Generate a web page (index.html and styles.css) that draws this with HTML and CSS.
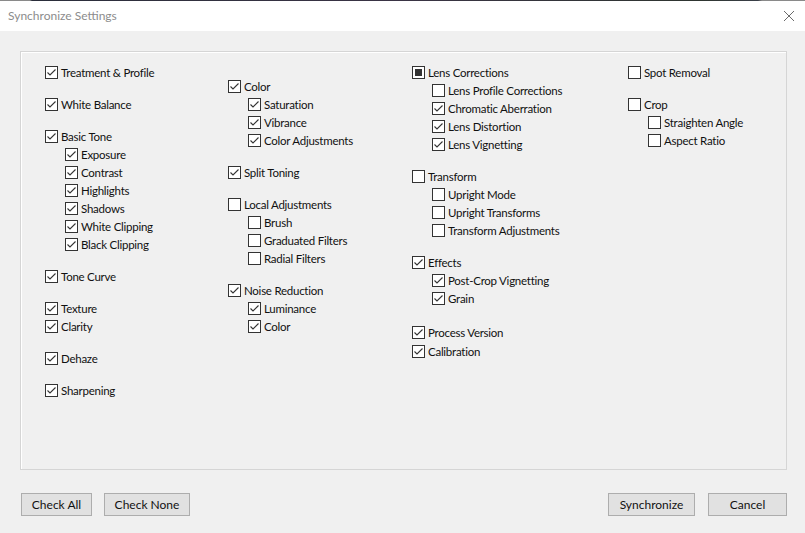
FILE: index.html
```html
<!DOCTYPE html>
<html>
<head>
<meta charset="utf-8">
<link rel="stylesheet" href="styles.css">
</head>
<body>
<div class="window">
  <div class="topline"></div>
  <div class="titlebar">
    <span class="title">Synchronize Settings</span>
    <svg class="close" width="12" height="12" viewBox="0 0 12 12"><path d="M1 1L11 11M11 1L1 11" stroke="#6b6b6b" stroke-width="1" fill="none"/></svg>
  </div>
  <div class="panel">
    <div class="col c1">
      <div class="group"><div class="row"><span class="cb on"></span>Treatment &amp; Profile</div></div>
      <div class="group"><div class="row"><span class="cb on"></span>White Balance</div></div>
      <div class="group">
        <div class="row"><span class="cb on"></span>Basic Tone</div>
        <div class="row sub"><span class="cb on"></span>Exposure</div>
        <div class="row sub"><span class="cb on"></span>Contrast</div>
        <div class="row sub"><span class="cb on"></span>Highlights</div>
        <div class="row sub"><span class="cb on"></span>Shadows</div>
        <div class="row sub"><span class="cb on"></span>White Clipping</div>
        <div class="row sub"><span class="cb on"></span>Black Clipping</div>
      </div>
      <div class="group"><div class="row"><span class="cb on"></span>Tone Curve</div></div>
      <div class="group">
        <div class="row"><span class="cb on"></span>Texture</div>
        <div class="row"><span class="cb on"></span>Clarity</div>
      </div>
      <div class="group"><div class="row"><span class="cb on"></span>Dehaze</div></div>
      <div class="group"><div class="row"><span class="cb on"></span>Sharpening</div></div>
    </div>
    <div class="col c2">
      <div class="group">
        <div class="row"><span class="cb on"></span>Color</div>
        <div class="row sub"><span class="cb on"></span>Saturation</div>
        <div class="row sub"><span class="cb on"></span>Vibrance</div>
        <div class="row sub"><span class="cb on"></span>Color Adjustments</div>
      </div>
      <div class="group"><div class="row"><span class="cb on"></span>Split Toning</div></div>
      <div class="group">
        <div class="row"><span class="cb"></span>Local Adjustments</div>
        <div class="row sub"><span class="cb"></span>Brush</div>
        <div class="row sub"><span class="cb"></span>Graduated Filters</div>
        <div class="row sub"><span class="cb"></span>Radial Filters</div>
      </div>
      <div class="group">
        <div class="row"><span class="cb on"></span>Noise Reduction</div>
        <div class="row sub"><span class="cb on"></span>Luminance</div>
        <div class="row sub"><span class="cb on"></span>Color</div>
      </div>
    </div>
    <div class="col c3">
      <div class="group">
        <div class="row"><span class="cb mixed"></span>Lens Corrections</div>
        <div class="row sub"><span class="cb"></span>Lens Profile Corrections</div>
        <div class="row sub"><span class="cb on"></span>Chromatic Aberration</div>
        <div class="row sub"><span class="cb on"></span>Lens Distortion</div>
        <div class="row sub"><span class="cb on"></span>Lens Vignetting</div>
      </div>
      <div class="group">
        <div class="row"><span class="cb"></span>Transform</div>
        <div class="row sub"><span class="cb"></span>Upright Mode</div>
        <div class="row sub"><span class="cb"></span>Upright Transforms</div>
        <div class="row sub"><span class="cb"></span>Transform Adjustments</div>
      </div>
      <div class="group">
        <div class="row"><span class="cb on"></span>Effects</div>
        <div class="row sub"><span class="cb on"></span>Post-Crop Vignetting</div>
        <div class="row sub"><span class="cb on"></span>Grain</div>
      </div>
      <div class="group pv">
        <div class="row"><span class="cb on"></span>Process Version</div>
        <div class="row tall"><span class="cb on"></span>Calibration</div>
      </div>
    </div>
    <div class="col c4">
      <div class="group"><div class="row"><span class="cb"></span>Spot Removal</div></div>
      <div class="group">
        <div class="row"><span class="cb"></span>Crop</div>
        <div class="row sub"><span class="cb"></span>Straighten Angle</div>
        <div class="row sub"><span class="cb"></span>Aspect Ratio</div>
      </div>
    </div>
  </div>
  <div class="footer">
    <div class="btns">
      <button class="btn w-all">Check All</button>
      <button class="btn w-none">Check None</button>
    </div>
    <div class="btns">
      <button class="btn w-sync">Synchronize</button>
      <button class="btn w-cancel">Cancel</button>
    </div>
  </div>
</div>
</body>
</html>
```
FILE: styles.css
```css
html, body {
  margin: 0;
  padding: 0;
}
body {
  background: #f0f0f0;
  font-family: Lato, "Noto Sans", sans-serif;
  font-size: 11.5px;
  letter-spacing: -0.25px;
  color: #000;
}
.window {
  width: 805px;
  height: 533px;
  overflow: hidden;
  display: flex;
  flex-direction: column;
}
.topline {
  height: 1px;
  background: linear-gradient(to right, #8a8a8a 0, #8a8a8a 30px, #2a2d3a 32px, #3a3445 400px, #2e3530 700px, #3a3f48 758px, #8a8a8a 762px, #8a8a8a 100%);
}
.titlebar {
  height: 30px;
  background: #fff;
  display: flex;
  align-items: center;
  justify-content: space-between;
  padding: 0 10px 0 8px;
}
.title {
  color: #8c8c8c;
  font-size: 12px;
  letter-spacing: 0;
  margin-top: -1px;
}
.close {
  margin-top: -1px;
}
.panel {
  box-sizing: border-box;
  margin: 20px 18px 0 20px;
  height: 419px;
  border: 1px solid #d5d5d5;
  box-shadow: inset 1px 1px 0 #fff;
  padding: 11px 0 0 24px;
  display: grid;
  grid-template-columns: 183px 184px 216px 1fr;
  align-items: start;
}
.col {
  display: flex;
  flex-direction: column;
  gap: 14px;
}
.c2 {
  margin-top: 14px;
}
.group {
  display: flex;
  flex-direction: column;
}
.group.pv {
  margin-top: 2px;
}
.row {
  height: 18px;
  display: flex;
  align-items: center;
  white-space: nowrap;
  color: #111;
}
.row.tall {
  height: 19px;
  padding-top: 1px;
}
.row.sub {
  padding-left: 20px;
}
.cb {
  box-sizing: border-box;
  width: 13px;
  height: 13px;
  border: 1px solid #333;
  background: #fff;
  margin-right: 3px;
  flex: none;
  position: relative;
}
.cb.on {
  background: #fff url("data:image/svg+xml;utf8,<svg xmlns='http://www.w3.org/2000/svg' width='11' height='11' viewBox='0 0 11 11'><path d='M1.5 5.5L4 8L9.5 2.5' stroke='%23333' stroke-width='1.1' fill='none'/></svg>") no-repeat center;
}
.cb.mixed::after {
  content: "";
  position: absolute;
  left: 2px;
  top: 2px;
  width: 7px;
  height: 7px;
  background: #333;
}
.footer {
  display: flex;
  justify-content: space-between;
  padding: 23px 18px 0 21px;
}
.btns {
  display: flex;
  gap: 12px;
}
.btns + .btns {
  gap: 13px;
}
.btn {
  box-sizing: border-box;
  height: 23px;
  border: 1px solid #adadad;
  background: #e1e1e1;
  font-family: Lato, "Noto Sans", sans-serif;
  font-size: 12px;
  color: #111;
  padding: 0;
  margin: 0;
}
.w-all { width: 71px; }
.w-none { width: 86px; }
.w-sync { width: 87px; }
.w-cancel { width: 79px; }
```
